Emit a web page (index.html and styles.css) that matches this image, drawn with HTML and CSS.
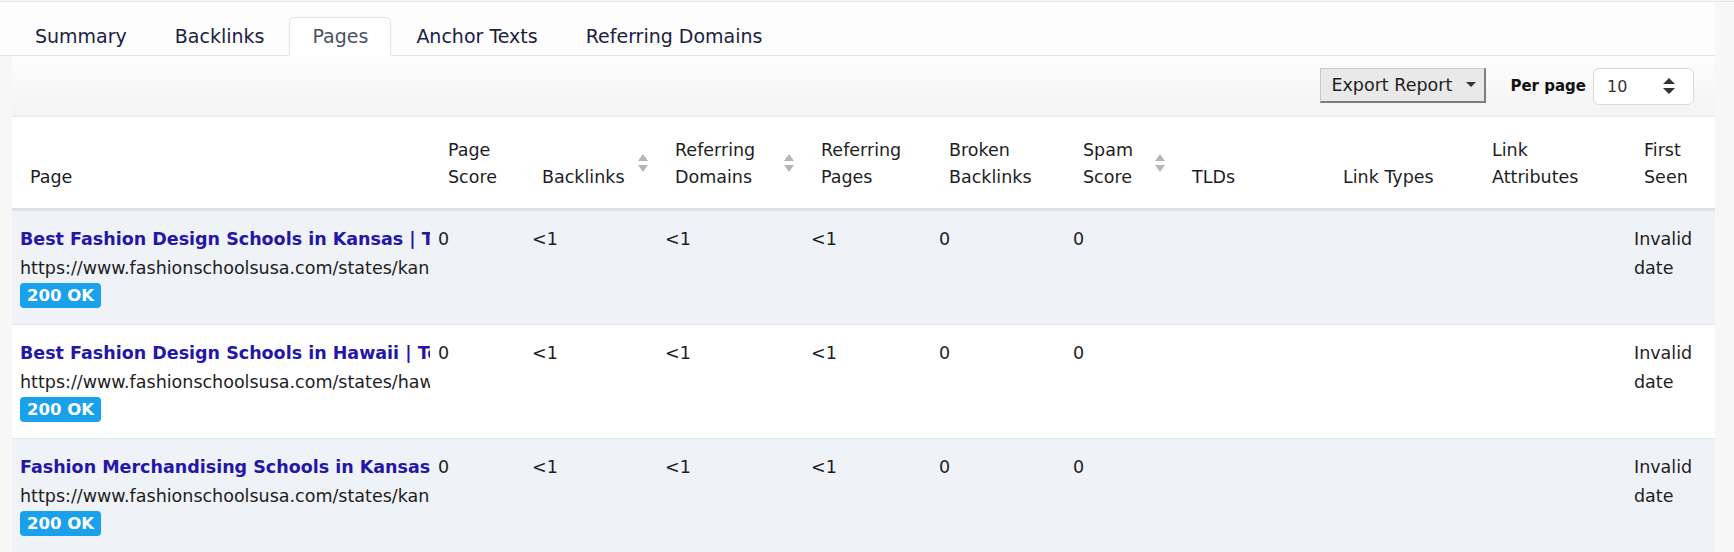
FILE: index.html
```html
<!DOCTYPE html>
<html lang="en">
<head>
    <meta charset="UTF-8">
    <meta name="viewport" content="width=device-width, initial-scale=1.0">
    <title>Backlink Report - Pages</title>
    <link rel="stylesheet" href="styles.css">
</head>
<body>
    <div class="report">
        <ul class="tabs">
            <li><a href="#" class="tab">Summary</a></li>
            <li><a href="#" class="tab">Backlinks</a></li>
            <li><a href="#" class="tab active">Pages</a></li>
            <li><a href="#" class="tab">Anchor Texts</a></li>
            <li><a href="#" class="tab">Referring Domains</a></li>
        </ul>

        <div class="toolbar">
            <button class="export-btn">Export Report <span class="caret"></span></button>
            <label class="per-page-label">Per page</label>
            <div class="per-page-select">
                <span>10</span>
                <svg width="14" height="18" viewBox="0 0 14 18"><path d="M7 1 L13 7 H1 Z M1 11 H13 L7 17 Z" fill="#333"/></svg>
            </div>
        </div>

        <table class="pages-table">
            <colgroup>
                <col style="width: 418px">
                <col style="width: 94px">
                <col style="width: 133px">
                <col style="width: 146px">
                <col style="width: 128px">
                <col style="width: 134px">
                <col style="width: 109px">
                <col style="width: 151px">
                <col style="width: 149px">
                <col style="width: 152px">
                <col style="width: 89px">
            </colgroup>
            <thead>
                <tr>
                    <th>Page</th>
                    <th>Page<br>Score</th>
                    <th class="sortable">Backlinks<svg class="sort-icon" viewBox="0 0 10 18"><path d="M5 0 L10 7 H0 Z M0 11 H10 L5 18 Z"/></svg></th>
                    <th class="sortable">Referring<br>Domains<svg class="sort-icon" viewBox="0 0 10 18"><path d="M5 0 L10 7 H0 Z M0 11 H10 L5 18 Z"/></svg></th>
                    <th>Referring<br>Pages</th>
                    <th>Broken<br>Backlinks</th>
                    <th class="sortable">Spam<br>Score<svg class="sort-icon" viewBox="0 0 10 18"><path d="M5 0 L10 7 H0 Z M0 11 H10 L5 18 Z"/></svg></th>
                    <th>TLDs</th>
                    <th>Link Types</th>
                    <th>Link<br>Attributes</th>
                    <th>First<br>Seen</th>
                </tr>
            </thead>
            <tbody>
                <tr>
                    <td class="page-cell">
                        <a href="#" class="page-title">Best Fashion Design Schools in Kansas | Top Fashion Schools</a>
                        <div class="page-url">https://www.fashionschoolsusa.com/states/kansas</div>
                        <div><span class="status-badge">200 OK</span></div>
                    </td>
                    <td>0</td>
                    <td>&lt;1</td>
                    <td>&lt;1</td>
                    <td>&lt;1</td>
                    <td>0</td>
                    <td>0</td>
                    <td></td>
                    <td></td>
                    <td></td>
                    <td>Invalid date</td>
                </tr>
                <tr>
                    <td class="page-cell">
                        <a href="#" class="page-title">Best Fashion Design Schools in Hawaii | Top Fashion Schools</a>
                        <div class="page-url">https://www.fashionschoolsusa.com/states/hawaii</div>
                        <div><span class="status-badge">200 OK</span></div>
                    </td>
                    <td>0</td>
                    <td>&lt;1</td>
                    <td>&lt;1</td>
                    <td>&lt;1</td>
                    <td>0</td>
                    <td>0</td>
                    <td></td>
                    <td></td>
                    <td></td>
                    <td>Invalid date</td>
                </tr>
                <tr>
                    <td class="page-cell">
                        <a href="#" class="page-title">Fashion Merchandising Schools in Kansas | Fashion Schools</a>
                        <div class="page-url">https://www.fashionschoolsusa.com/states/kansas/merchandising</div>
                        <div><span class="status-badge">200 OK</span></div>
                    </td>
                    <td>0</td>
                    <td>&lt;1</td>
                    <td>&lt;1</td>
                    <td>&lt;1</td>
                    <td>0</td>
                    <td>0</td>
                    <td></td>
                    <td></td>
                    <td></td>
                    <td>Invalid date</td>
                </tr>
            </tbody>
        </table>
    </div>
</body>
</html>
```

FILE: styles.css
```css
* {
    margin: 0;
    padding: 0;
    box-sizing: border-box;
}

body {
    font-family: "DejaVu Sans", Inter, sans-serif;
    background: #f7f7f8;
    color: #222;
    border-top: 1px solid #e6e7ea;
    margin-top: 1px;
    overflow: hidden;
}

.report {
    margin-left: 12px;
    width: 1703px;
}

/* tabs */
.tabs {
    list-style: none;
    display: flex;
    gap: 2px;
    padding-top: 15px;
    border-bottom: 1px solid #dfe2e6;
    background: #fdfdfd;
    margin-left: -12px;
    padding-left: 12px;
}

.tab {
    display: block;
    height: 39px;
    padding: 0 22px;
    margin-bottom: -1px;
    line-height: 37px;
    font-size: 19px;
    color: #1a2242;
    text-decoration: none;
    border: 1px solid transparent;
    border-radius: 5px 5px 0 0;
}

.tab.active {
    color: #4b5262;
    background: #fff;
    border-color: #e3e5e9 #e3e5e9 #fff;
}

/* toolbar */
.toolbar {
    height: 61px;
    display: flex;
    align-items: center;
    justify-content: flex-end;
    padding-right: 21px;
    background: linear-gradient(#fdfdfd, #f3f3f4);
    border-bottom: 1px solid #e4e6ea;
}

.export-btn {
    height: 35px;
    width: 166px;
    background: #e9e9e9;
    border: 1px solid #c9c9c9;
    border-right: 2px solid #7d7d7d;
    border-bottom: 2px solid #7d7d7d;
    font-family: "DejaVu Sans", Inter, sans-serif;
    font-size: 17.5px;
    color: #222;
    display: flex;
    align-items: center;
    padding: 0 8px 0 10px;
    justify-content: space-between;
    margin-top: -2px;
}

.caret {
    width: 0;
    height: 0;
    border-left: 5px solid transparent;
    border-right: 5px solid transparent;
    border-top: 5px solid #333;
}

.per-page-label {
    margin-left: 24px;
    font-weight: 700;
    font-size: 15px;
    color: #111;
}

.per-page-select {
    margin-left: 7px;
    width: 101px;
    height: 37px;
    background: #fff;
    border: 1px solid #d9d9dc;
    border-radius: 6px;
    display: flex;
    align-items: center;
    justify-content: space-between;
    padding: 0 17px 0 13px;
    font-size: 16px;
    color: #333;
}

/* table */
.pages-table {
    width: 1703px;
    table-layout: fixed;
    border-collapse: collapse;
    background: #fff;
    font-size: 17.5px;
}

.pages-table th {
    position: relative;
    text-align: left;
    vertical-align: bottom;
    font-weight: 400;
    font-size: 17.5px;
    line-height: 27px;
    padding: 20px 8px 17px 18px;
    height: 89px;
    color: #1d1d1f;
    border-bottom: 3px solid #dde1e8;
}

.sort-icon {
    position: absolute;
    right: 9px;
    top: 37px;
    width: 10px;
    height: 18px;
    fill: #b6b6b8;
}

.pages-table td {
    vertical-align: top;
    line-height: 29px;
    padding: 14px 8px 12px 8px;
    border-bottom: 1px solid #e2e5ea;
    color: #1d1d1f;
}

.pages-table tbody tr:nth-child(odd) {
    background: #eff2f6;
}

.page-cell {
    padding-right: 0 !important;
    white-space: nowrap;
    overflow: hidden;
}

.page-title {
    display: block;
    font-weight: 700;
    color: #2316a9;
    text-decoration: none;
    overflow: hidden;
}

.page-url {
    overflow: hidden;
}

.status-badge {
    display: inline-block;
    height: 25px;
    line-height: 25px;
    padding: 0 7px;
    border-radius: 4px;
    background: #1aa1ec;
    color: #fff;
    font-weight: 700;
    font-size: 16.5px;
    vertical-align: top;
}
```
